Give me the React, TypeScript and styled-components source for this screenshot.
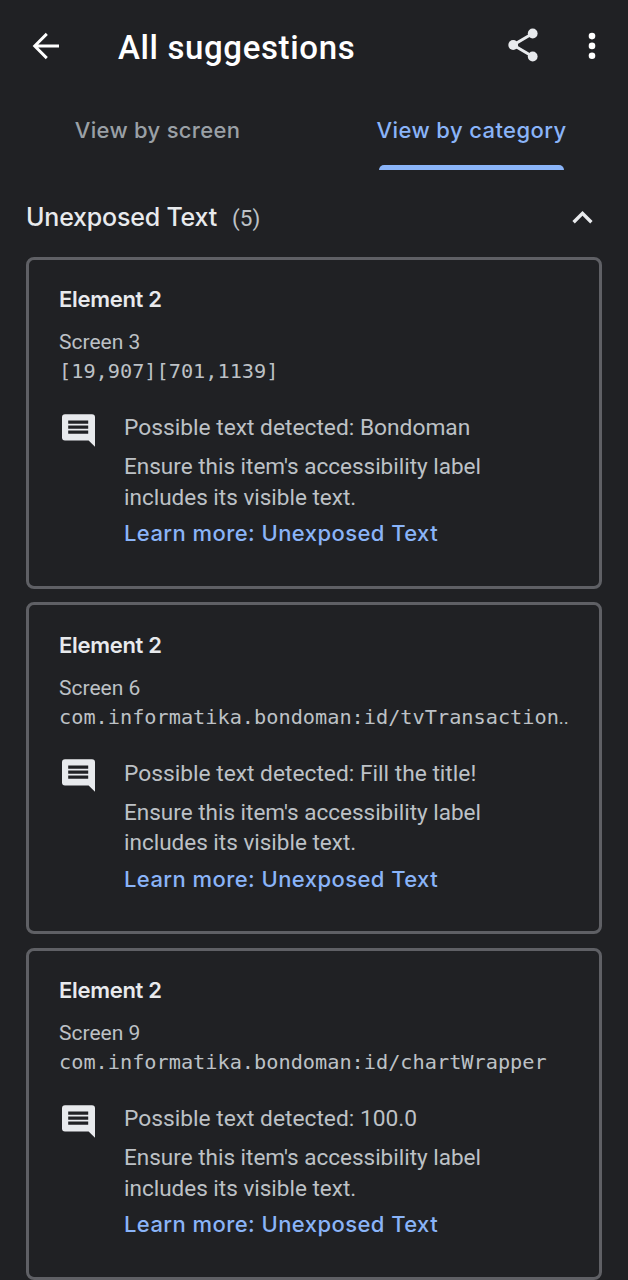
import React from "react";
import styled, { createGlobalStyle } from "styled-components";

const GlobalStyle = createGlobalStyle`
  * { box-sizing: border-box; }
  body {
    margin: 0;
    background: #202124;
    font-family: Roboto, sans-serif;
  }
`;

const brandFont = `Inter, "Liberation Sans", sans-serif`;

const Screen = styled.main`
  width: 628px;
  height: 1280px;
  overflow: hidden;
  background: #202124;
  color: #e8eaed;
`;

const AppBar = styled.header`
  display: flex;
  align-items: center;
  height: 92px;
  padding: 0 16px 0 26px;
`;

const Title = styled.h1`
  flex: 1;
  margin: 3px 0 0 52px;
  font-size: 33px;
  line-height: 40px;
  font-weight: 500;
  letter-spacing: 0.63px;
  color: #fff;
  white-space: nowrap;
`;

const IconButton = styled.button<{ $gap?: number }>`
  display: flex;
  width: 40px;
  height: 40px;
  margin: 0 0 0 ${(p) => p.$gap ?? 0}px;
  padding: 0;
  border: 0;
  background: none;
  color: inherit;
`;

const Tabs = styled.nav`
  display: grid;
  grid-template-columns: 1fr 1fr;
  height: 78px;
`;

const Tab = styled.button<{ $active?: boolean }>`
  display: flex;
  flex-direction: column;
  align-items: center;
  justify-content: space-between;
  padding: 23px 0 0 1px;
  border: 0;
  background: none;
  color: ${(p) => (p.$active ? "#8ab4f8" : "#9aa0a6")};
  font: 500 22px/30px ${brandFont};
  letter-spacing: ${(p) => (p.$active ? 0.4 : 0.3)}px;
  white-space: nowrap;
`;

const Indicator = styled.span`
  width: 185px;
  height: 5px;
  border-radius: 5px 5px 0 0;
  background: #8ab4f8;
`;

const SectionHeader = styled.div`
  display: flex;
  align-items: center;
  height: 86.5px;
  padding: 7px 26px 0 26px;
`;

const SectionTitle = styled.h2`
  margin: 0;
  font: 500 25px/34px ${brandFont};
  letter-spacing: -0.2px;
  white-space: nowrap;
`;

const Count = styled.span`
  flex: 1;
  margin: 2px 0 0 15px;
  font-size: 22.5px;
  line-height: 34px;
  color: #bdc1c6;
`;

const CardList = styled.section`
  display: flex;
  flex-direction: column;
  gap: 13.5px;
  padding: 0 26px;
`;

const Card = styled.article`
  flex: none;
  height: 332px;
  padding: 25px 29px 0 30px;
  border: 3px solid #5f6065;
  border-radius: 8px;
  color: #bdc1c6;
`;

const ElementName = styled.h3`
  margin: -0.5px 0 0;
  color: #e8eaed;
  font: 600 22px/30px ${brandFont};
  letter-spacing: -0.3px;
  white-space: nowrap;
`;

const ScreenName = styled.div`
  margin-top: 14px;
  font-size: 21px;
  line-height: 29px;
`;

const ResourceId = styled.div`
  height: 29px;
  font-family: "DejaVu Sans Mono", monospace;
  font-size: 20.25px;
  line-height: 29px;
  white-space: pre;
`;

const Trail = styled.span`
  font-family: Roboto, sans-serif;
  font-size: 19px;
`;

const Finding = styled.div`
  display: flex;
  margin-top: 27px;
`;

const FindingIcon = styled.div`
  width: 65px;
  height: 38px;
  margin-top: -1.5px;
`;

const FindingBody = styled.div`
  font-size: 22.75px;
  white-space: nowrap;
`;

const Line = styled.p`
  margin: 0;
  line-height: 30.5px;
`;

const Advice = styled(Line)`
  margin-top: 7.5px;
  font-size: 22.5px;
`;

const LearnMore = styled.a`
  display: block;
  margin-top: 6px;
  color: #8ab4f8;
  font: 500 22px/30px ${brandFont};
  letter-spacing: 0.43px;
`;

const BackIcon = () => (
  <svg width="40" height="40" viewBox="0 0 40 40" fill="none" stroke="#fff" strokeWidth="2.9">
    <path d="M33 20H9M20.8 7.9L8.7 20l12.1 12.1" />
  </svg>
);

const ShareIcon = () => (
  <svg width="40" height="40" viewBox="0 0 40 40" fill="#e8eaed">
    <path d="M28.7 7.5L9.2 19l19.5 11.5" fill="none" stroke="#e8eaed" strokeWidth="3" />
    <circle cx="28.7" cy="7.5" r="4.9" />
    <circle cx="9.2" cy="19" r="4.9" />
    <circle cx="28.7" cy="30.5" r="4.9" />
  </svg>
);

const MoreIcon = () => (
  <svg width="40" height="40" viewBox="0 0 40 40" fill="#fff">
    <circle cx="20" cy="10.1" r="3.3" />
    <circle cx="20" cy="19.9" r="3.3" />
    <circle cx="20" cy="29.7" r="3.3" />
  </svg>
);

const CollapseIcon = () => (
  <svg width="40" height="40" viewBox="0 0 40 40" fill="none" stroke="#e8eaed" strokeWidth="3.4">
    <path d="M11.6 25.2l8.9-8.9 8.9 8.9" />
  </svg>
);

const CommentIcon = () => (
  <svg width="40" height="40" viewBox="0 0 40 40">
    <path
      d="M6 2.2H33Q36 2.2 36 5.2V34.8L29.6 28.4H6Q3 28.4 3 25.4V5.2Q3 2.2 6 2.2Z"
      fill="#e8eaed"
    />
    <path d="M9.2 10.2h20M9.2 15.2h20M9.2 20.2h20" stroke="#202124" strokeWidth="3.2" />
  </svg>
);

type Suggestion = { screen: string; id: string; cut?: boolean; detected: string };

const suggestions: Suggestion[] = [
  { screen: "Screen 3", id: "[19,907][701,1139]", detected: "Bondoman" },
  {
    screen: "Screen 6",
    id: "com.informatika.bondoman:id/tvTransaction",
    cut: true,
    detected: "Fill the title!",
  },
  { screen: "Screen 9", id: "com.informatika.bondoman:id/chartWrapper", detected: "100.0" },
];

const SuggestionCard = ({ screen, id, cut, detected }: Suggestion) => (
  <Card>
    <ElementName>Element 2</ElementName>
    <ScreenName>{screen}</ScreenName>
    <ResourceId>
      {id}
      {cut && <Trail>..</Trail>}
    </ResourceId>
    <Finding>
      <FindingIcon>
        <CommentIcon />
      </FindingIcon>
      <FindingBody>
        <Line>Possible text detected: {detected}</Line>
        <Advice>
          Ensure this item's accessibility label
          <br />
          includes its visible text.
        </Advice>
        <LearnMore>Learn more: Unexposed Text</LearnMore>
      </FindingBody>
    </Finding>
  </Card>
);

export default function App() {
  return (
    <Screen>
      <GlobalStyle />
      <AppBar>
        <IconButton aria-label="Back">
          <BackIcon />
        </IconButton>
        <Title>All suggestions</Title>
        <IconButton aria-label="Share">
          <ShareIcon />
        </IconButton>
        <IconButton aria-label="More options" $gap={28}>
          <MoreIcon />
        </IconButton>
      </AppBar>
      <Tabs>
        <Tab>View by screen</Tab>
        <Tab $active>
          View by category
          <Indicator />
        </Tab>
      </Tabs>
      <SectionHeader>
        <SectionTitle>Unexposed Text</SectionTitle>
        <Count>(5)</Count>
        <IconButton aria-label="Collapse">
          <CollapseIcon />
        </IconButton>
      </SectionHeader>
      <CardList>
        {suggestions.map((s) => (
          <SuggestionCard key={s.screen} {...s} />
        ))}
      </CardList>
    </Screen>
  );
}
